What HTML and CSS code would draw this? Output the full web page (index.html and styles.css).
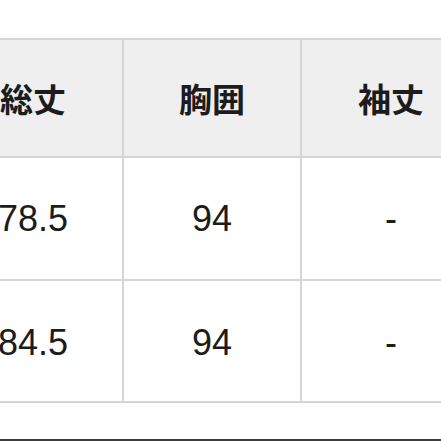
FILE: index.html
```html
<!DOCTYPE html>
<html lang="ja">
<head>
<meta charset="utf-8">
<link rel="stylesheet" href="styles.css">
</head>
<body>
<div class="page">
  <div class="sizes">
    <div class="cell head">総丈</div>
    <div class="cell head">胸囲</div>
    <div class="cell head">袖丈</div>
    <div class="cell num r1">78.5</div>
    <div class="cell num r1">94</div>
    <div class="cell num r1">-</div>
    <div class="cell num r2">84.5</div>
    <div class="cell num r2">94</div>
    <div class="cell num r2">-</div>
  </div>
  <div class="rule"></div>
</div>
</body>
</html>
```
FILE: styles.css
```css
html, body {
  margin: 0;
  padding: 0;
  background: #ffffff;
}
.page {
  width: 441px;
  height: 441px;
  overflow: hidden;
  padding-top: 38px;
  box-sizing: border-box;
}
.sizes {
  display: grid;
  grid-template-columns: 178px 176px 178px;
  grid-template-rows: 116px 121px 120px;
  gap: 2px;
  padding: 2px 0;
  background: #d5d5d5;
  margin-left: -56px;
  width: 536px;
}
.cell {
  display: flex;
  align-items: center;
  justify-content: center;
  background: #ffffff;
  color: #1c1c1c;
}
.head {
  background: #efefef;
  font-family: "Noto Sans CJK JP", "Noto Sans", sans-serif;
  font-weight: 700;
  font-size: 33px;
}
.num {
  font-family: "Liberation Sans", Arial, sans-serif;
  font-size: 36px;
}
.r2 {
  padding-top: 4px;
}
.rule {
  margin-top: 36px;
  height: 2px;
  background: #3d3d3d;
}
```
